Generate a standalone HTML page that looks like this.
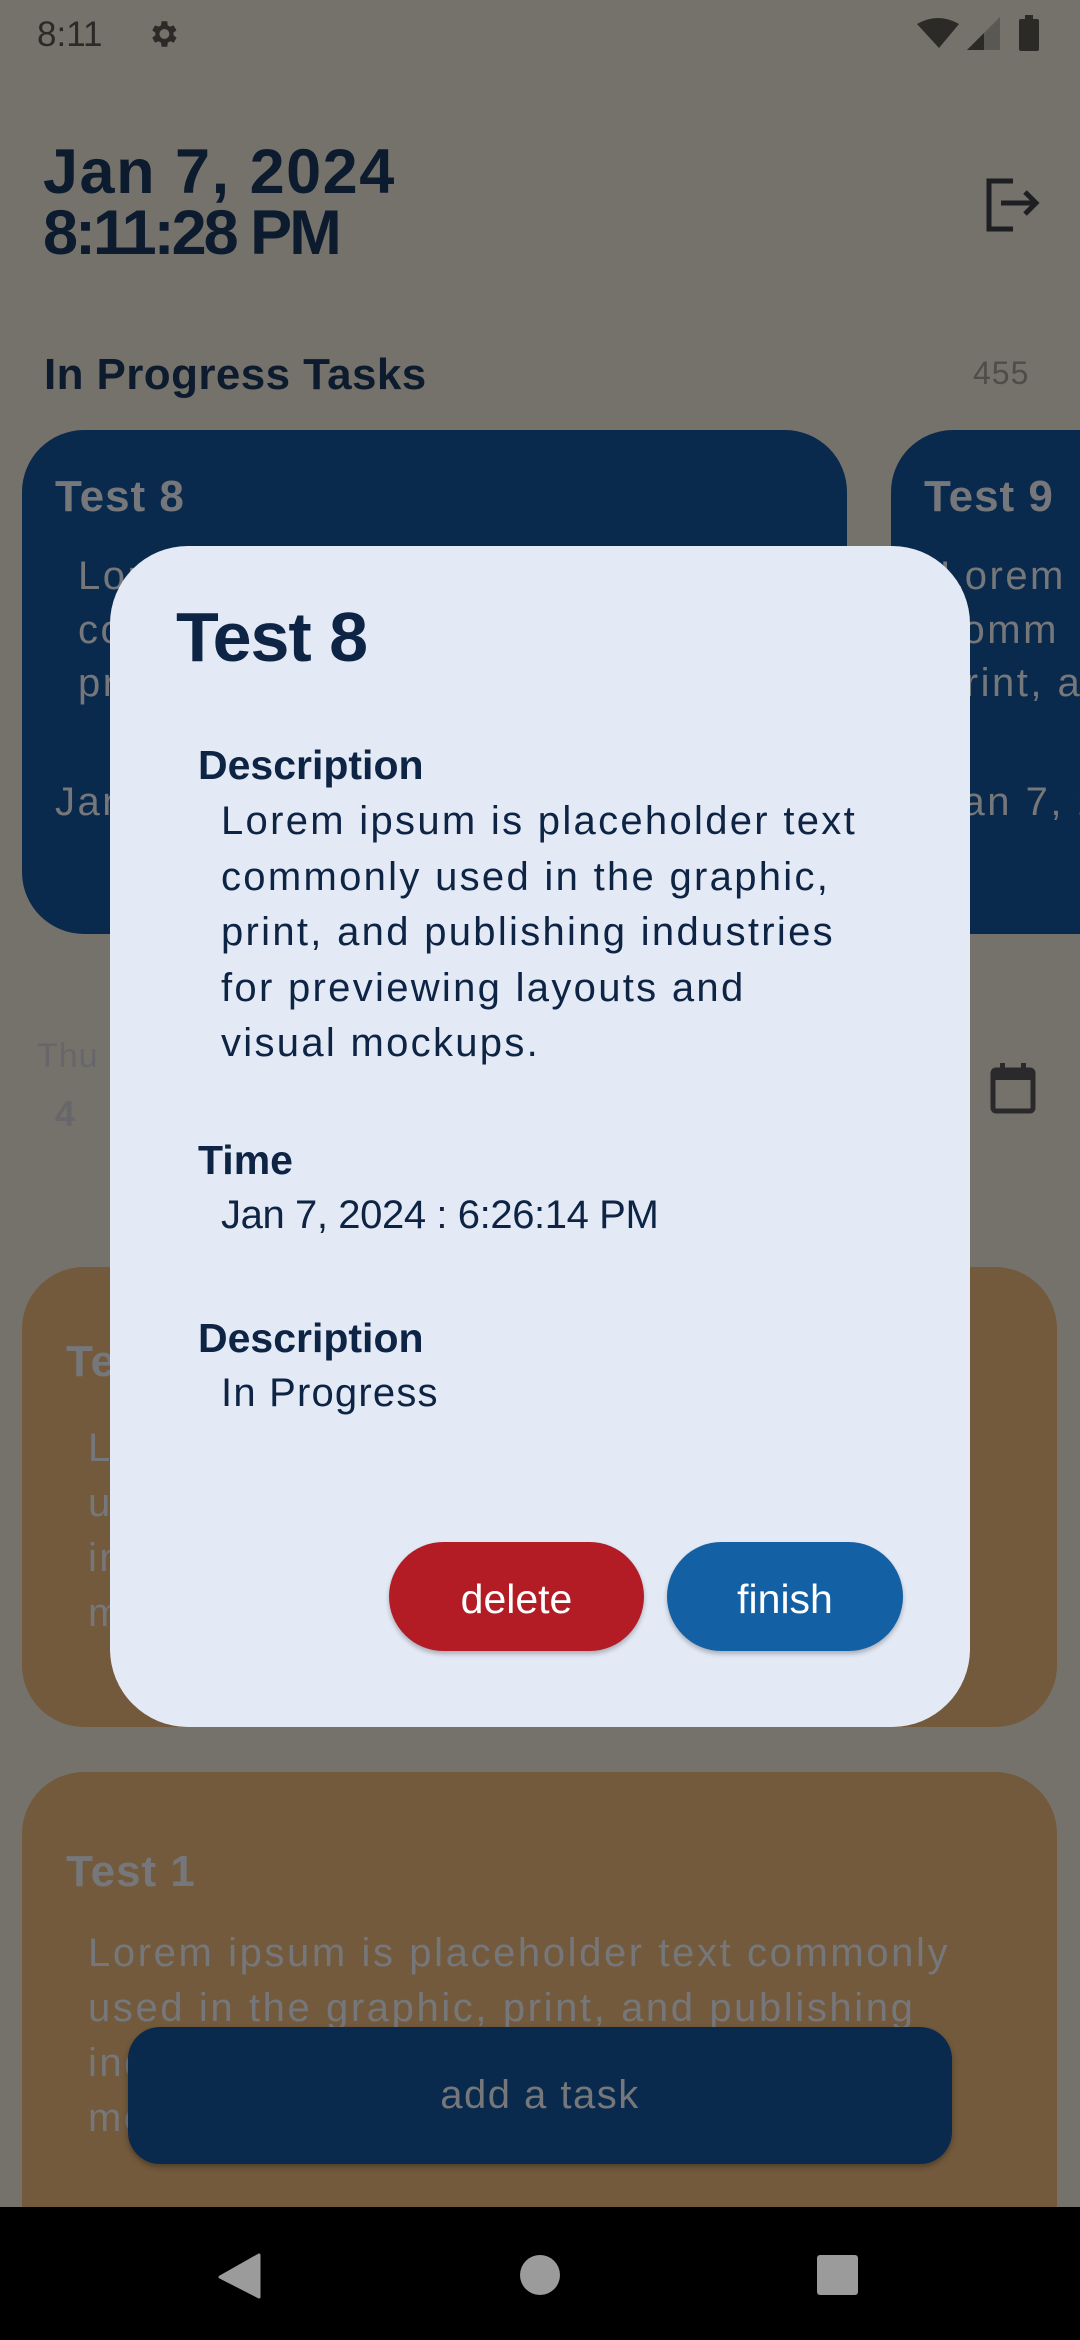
<!DOCTYPE html>
<html><head><meta charset="utf-8"><style>
*{margin:0;padding:0;box-sizing:border-box}
body{width:1080px;height:2340px;background:#75726b;position:relative;overflow:hidden;font-family:"Liberation Sans",sans-serif}
.t{position:absolute;line-height:1;white-space:nowrap}
.card{position:absolute;border-radius:62px}
.g{color:#76777a}
.d{color:#0d2444}
.b{letter-spacing:2.5px}
</style></head><body>
<!-- status bar -->
<div class="t" style="left:37px;top:17px;font-size:35px;color:#2b2a27">8:11</div>
<svg style="position:absolute;left:146px;top:17px" width="34" height="34" viewBox="0 0 24 24"><path fill="#2b2a27" d="M19.4 13a7.5 7.5 0 0 0 0-2l2.1-1.6-2-3.5-2.5 1a7 7 0 0 0-1.7-1L15 3h-4l-.4 2.9a7 7 0 0 0-1.7 1l-2.5-1-2 3.5L6.6 11a7.5 7.5 0 0 0 0 2l-2.2 1.6 2 3.5 2.5-1a7 7 0 0 0 1.7 1L11 21h4l.4-2.9a7 7 0 0 0 1.7-1l2.5 1 2-3.5zM13 15.5a3.5 3.5 0 1 1 0-7 3.5 3.5 0 0 1 0 7z"/></svg>
<svg style="position:absolute;left:915px;top:14px" width="130" height="40" viewBox="0 0 130 40"><path fill="#2b2a27" d="M2 10 Q23 -2 44 10 L24 34 Z"/><path fill="#5a5853" d="M85 3 L85 36 L52 36 Z"/><path fill="#2b2a27" d="M69 19 L69 36 L52 36 Z"/><rect x="104" y="5" width="20" height="32" rx="2" fill="#2b2a27"/><rect x="110" y="1" width="8" height="5" fill="#2b2a27"/></svg>
<!-- header -->
<div class="t" style="left:43px;top:141px;font-size:63px;font-weight:bold;color:#0d1b2e;letter-spacing:1.5px">Jan 7, 2024</div>
<div class="t" style="left:43px;top:202px;font-size:63px;font-weight:bold;color:#0d1b2e;letter-spacing:-3px">8:11:28 PM</div>
<svg style="position:absolute;left:985px;top:178px" width="58" height="54" viewBox="0 0 58 54"><path d="M28 3H4v48h24" fill="none" stroke="#1e1f22" stroke-width="5"/><path d="M16 25h35M40 14l11 11-11 11" fill="none" stroke="#1e1f22" stroke-width="5"/></svg>
<div class="t" style="left:44px;top:353px;font-size:44px;font-weight:bold;color:#0d1b2e;letter-spacing:0.4px">In Progress Tasks</div>
<div class="t" style="left:973px;top:357px;font-size:32px;color:#4e4d4a;letter-spacing:1px">455</div>
<!-- blue cards -->
<div class="card" style="left:22px;top:430px;width:825px;height:504px;background:#0a2a4d"></div>
<div class="card" style="left:891px;top:430px;width:260px;height:504px;background:#0a2a4d"></div>
<div class="t g" style="left:55px;top:475px;font-size:44px;font-weight:bold;letter-spacing:1px">Test 8</div>
<div class="t g b" style="left:78px;top:556px;font-size:40px">Lorem</div>
<div class="t g b" style="left:78px;top:610px;font-size:40px">co</div>
<div class="t g b" style="left:78px;top:663px;font-size:40px">pr</div>
<div class="t g b" style="left:55px;top:782px;font-size:40px">Jan</div>
<div class="t g" style="left:924px;top:475px;font-size:44px;font-weight:bold;letter-spacing:1px">Test 9</div>
<div class="t g b" style="left:940px;top:556px;font-size:40px">Lorem</div>
<div class="t g b" style="left:940px;top:610px;font-size:40px">comm</div>
<div class="t g b" style="left:940px;top:663px;font-size:40px">print, a</div>
<div class="t g b" style="left:940px;top:782px;font-size:40px">Jan 7, 20</div>
<!-- date row -->
<div class="t" style="left:37px;top:1039px;font-size:34px;color:#67666a;letter-spacing:1px">Thu</div>
<div class="t" style="left:55px;top:1096px;font-size:36px;font-weight:bold;color:#67666a">4</div>
<svg style="position:absolute;left:990px;top:1062px" width="46" height="52" viewBox="0 0 46 52"><rect x="3" y="8" width="40" height="41" rx="3" fill="none" stroke="#2a2a2c" stroke-width="5"/><rect x="3" y="8" width="40" height="10" fill="#2a2a2c"/><rect x="10" y="1" width="5" height="10" fill="#2a2a2c"/><rect x="31" y="1" width="5" height="10" fill="#2a2a2c"/></svg>
<!-- orange cards -->
<div class="card" style="left:22px;top:1267px;width:1035px;height:460px;background:#735a3c"></div>
<div class="t g" style="left:66px;top:1340px;font-size:44px;font-weight:bold;letter-spacing:1px">Test 3</div>
<div class="t g b" style="left:88px;top:1428px;font-size:40px">Lorem</div>
<div class="t g b" style="left:88px;top:1483px;font-size:40px">used</div>
<div class="t g b" style="left:88px;top:1538px;font-size:40px">ind</div>
<div class="t g b" style="left:88px;top:1593px;font-size:40px">mo</div>
<div class="card" style="left:22px;top:1772px;width:1035px;height:520px;background:#735a3c"></div>
<div class="t g" style="left:66px;top:1850px;font-size:44px;font-weight:bold;letter-spacing:1px">Test 1</div>
<div class="t g" style="left:88px;top:1933px;font-size:40px;letter-spacing:2.6px">Lorem ipsum is placeholder text commonly</div>
<div class="t g" style="left:88px;top:1988px;font-size:40px;letter-spacing:2.6px">used in the graphic, print, and publishing</div>
<div class="t g b" style="left:88px;top:2043px;font-size:40px">industries</div>
<div class="t g b" style="left:88px;top:2098px;font-size:40px">mo</div>
<div style="position:absolute;left:128px;top:2027px;width:824px;height:137px;border-radius:32px;background:#0a2a4d;box-shadow:0 3px 6px rgba(0,0,0,.3)"></div>
<div class="t" style="left:128px;width:824px;text-align:center;top:2075px;font-size:40px;color:#76777a;letter-spacing:1.5px">add a task</div>
<!-- dialog -->
<div style="position:absolute;left:110px;top:546px;width:860px;height:1181px;border-radius:78px;background:#e3e9f5"></div>
<div class="t d" style="left:176px;top:602px;font-size:70px;font-weight:bold;letter-spacing:-1px">Test 8</div>
<div class="t d" style="left:198px;top:745px;font-size:41px;font-weight:bold">Description</div>
<div class="t d" style="left:221px;top:802px;font-size:40px;line-height:55.5px;white-space:nowrap;letter-spacing:2.3px;margin-top:-8px">Lorem ipsum is placeholder text<br>commonly used in the graphic,<br>print, and publishing industries<br>for previewing layouts and<br>visual mockups.</div>
<div class="t d" style="left:198px;top:1140px;font-size:41px;font-weight:bold">Time</div>
<div class="t d" style="left:221px;top:1195px;font-size:40px;letter-spacing:-0.4px">Jan 7, 2024 : 6:26:14 PM</div>
<div class="t d" style="left:198px;top:1318px;font-size:41px;font-weight:bold">Description</div>
<div class="t d" style="left:221px;top:1373px;font-size:40px;letter-spacing:1.2px">In Progress</div>
<div style="position:absolute;left:389px;top:1542px;width:255px;height:109px;border-radius:55px;background:#b31c24;box-shadow:0 3px 5px rgba(0,0,0,.25)"></div>
<div class="t" style="left:389px;width:255px;text-align:center;top:1579px;font-size:41px;color:#fff">delete</div>
<div style="position:absolute;left:667px;top:1542px;width:236px;height:109px;border-radius:55px;background:#1460a5;box-shadow:0 3px 5px rgba(0,0,0,.25)"></div>
<div class="t" style="left:667px;width:236px;text-align:center;top:1579px;font-size:41px;color:#fff">finish</div>
<!-- nav -->
<div style="position:absolute;left:0;top:2207px;width:1080px;height:133px;background:#000"></div>
<svg style="position:absolute;left:0;top:2207px" width="1080" height="133" viewBox="0 0 1080 133"><path d="M259 48 L259 90 L220 70 Z" fill="#9b9b9b" stroke="#9b9b9b" stroke-width="3" stroke-linejoin="round"/><circle cx="540" cy="68" r="20" fill="#9b9b9b"/><rect x="817" y="48" width="41" height="40" rx="3" fill="#9b9b9b"/></svg>
</body></html>
